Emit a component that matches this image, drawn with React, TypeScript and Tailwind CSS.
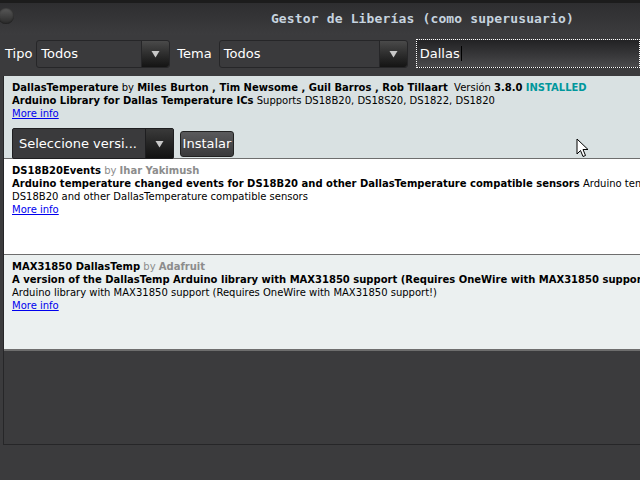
import React from "react";

const sans = { fontFamily: '"DejaVu Sans", Verdana, sans-serif' } as React.CSSProperties;

function Select({ label, w }: { label: string; w: string }) {
  return (
    <div className={`flex h-[28px] ${w} shrink-0 rounded-[3px] border border-[#262628] bg-[#3a3a3c]`}>
      <div className="flex flex-1 items-center pl-[4px] text-[13px] text-white">{label}</div>
      <div className="flex w-[28px] items-center justify-center rounded-r-[3px] border-l border-[#262628] bg-gradient-to-b from-[#4a4a4a] to-[#141414]">
        <svg width="9" height="8" viewBox="0 0 9 8"><polygon points="0.5,1 8.5,1 4.5,7.5" fill="#c8c8c8" /></svg>
      </div>
    </div>
  );
}

export default function App() {
  return (
    <div className="relative h-[480px] w-[640px] overflow-hidden bg-[#3b3b3d]" style={sans}>
      {/* top strip */}
      <div className="h-[3px] bg-[#1c1c1c]" />
      {/* title bar */}
      <div className="relative flex h-[32px] items-center justify-end bg-gradient-to-b from-[#2e2e30] to-[#3c3c3e] pr-[66px]">
        <div className="absolute left-[-2px] top-[5px] h-[16px] w-[16px] rounded-full bg-gradient-to-b from-[#5a5a5a] to-[#2a2a2a] shadow-[inset_0_0_2px_#111]" />
        <span className="text-[13px] font-bold tracking-[0.15px] text-[#c6d3df]" style={{ fontFamily: '"DejaVu Sans Mono", monospace' }}>
          Gestor de Liberías (como superusuario)
        </span>
      </div>
      {/* filter row */}
      <div className="mt-[4px] flex h-[29px] items-center">
        <span className="ml-[5px] mr-[4px] text-[13px] text-white">Tipo</span>
        <Select label="Todos" w="w-[134px]" />
        <span className="ml-[7px] mr-[7px] text-[13px] text-white">Tema</span>
        <Select label="Todos" w="w-[189px]" />
        <div className="ml-[8px] flex h-[29px] flex-1 items-center border border-dotted border-white bg-gradient-to-b from-[#222224] to-[#4a4a4c] pl-[3px] text-[13px] text-white">
          Dallas<span className="ml-[1px] inline-block h-[15px] w-[1px] bg-black" />
        </div>
      </div>
      {/* list panel */}
      <div className="ml-[3px] mt-[8px] h-[369px] border-b border-l border-[#262628] text-[10px] leading-[13px] text-black">
        {/* item 1 */}
        <div className="h-[83px] border-b border-[#6e6e6e] bg-[#d9e1e2] pl-[8px] pt-[5px]">
          <div className="whitespace-nowrap">
            <b>DallasTemperature</b> by <b>Miles Burton , Tim Newsome , Guil Barros , Rob Tillaart</b>&nbsp; Versión <b>3.8.0</b> <b className="text-[#00979c]">INSTALLED</b>
          </div>
          <div className="whitespace-nowrap">
            <b>Arduino Library for Dallas Temperature ICs</b> Supports DS18B20, DS18S20, DS1822, DS1820
          </div>
          <div className="text-[#0000ee] underline">More info</div>
          <div className="mt-[8px] flex items-center gap-[6px]">
            <div className="flex h-[31px] w-[162px] rounded-[2px] border border-[#1e1e20] bg-[#3a3a3c]">
              <div className="flex flex-1 items-center pl-[6px] text-[13px] text-white">Seleccione versi...</div>
              <div className="flex w-[28px] items-center justify-center border-l border-[#1e1e20] bg-gradient-to-b from-[#3a3a3a] to-[#121212]">
                <svg width="9" height="8" viewBox="0 0 9 8"><polygon points="0.5,1 8.5,1 4.5,7.5" fill="#c8c8c8" /></svg>
              </div>
            </div>
            <div className="flex h-[26px] w-[54px] items-center justify-center rounded-[3px] border border-[#222] bg-gradient-to-b from-[#5a5a5c] to-[#3a3a3c] text-[13px] text-white">
              Instalar
            </div>
          </div>
        </div>
        {/* item 2 */}
        <div className="h-[96px] border-b border-[#6e6e6e] bg-white pl-[8px] pt-[5px]">
          <div className="whitespace-nowrap">
            <b>DS18B20Events</b> <span className="text-[#8c8c8c]">by <b>Ihar Yakimush</b></span>
          </div>
          <div className="whitespace-nowrap">
            <b>Arduino temperature changed events for DS18B20 and other DallasTemperature compatible sensors</b> Arduino temperature changed events for
          </div>
          <div className="whitespace-nowrap">DS18B20 and other DallasTemperature compatible sensors</div>
          <div className="text-[#0000ee] underline">More info</div>
        </div>
        {/* item 3 */}
        <div className="h-[96px] border-b-2 border-[#6e6e6e] bg-[#ebf0f0] pl-[8px] pt-[5px]">
          <div className="whitespace-nowrap">
            <b>MAX31850 DallasTemp</b> <span className="text-[#8c8c8c]">by <b>Adafruit</b></span>
          </div>
          <div className="whitespace-nowrap">
            <b>A version of the DallasTemp Arduino library with MAX31850 support (Requires OneWire with MAX31850 support!)</b>
          </div>
          <div className="whitespace-nowrap">Arduino library with MAX31850 support (Requires OneWire with MAX31850 support!)</div>
          <div className="text-[#0000ee] underline">More info</div>
        </div>
      </div>
      {/* mouse cursor */}
      <svg className="absolute left-[576px] top-[138px]" width="13" height="20" viewBox="0 0 13 20">
        <path d="M1 1 L1 16 L4.5 12.5 L7 18.5 L9.5 17.5 L7 11.5 L12 11.5 Z" fill="#ffffff" stroke="#000" strokeWidth="1" strokeLinejoin="miter" />
      </svg>
    </div>
  );
}
